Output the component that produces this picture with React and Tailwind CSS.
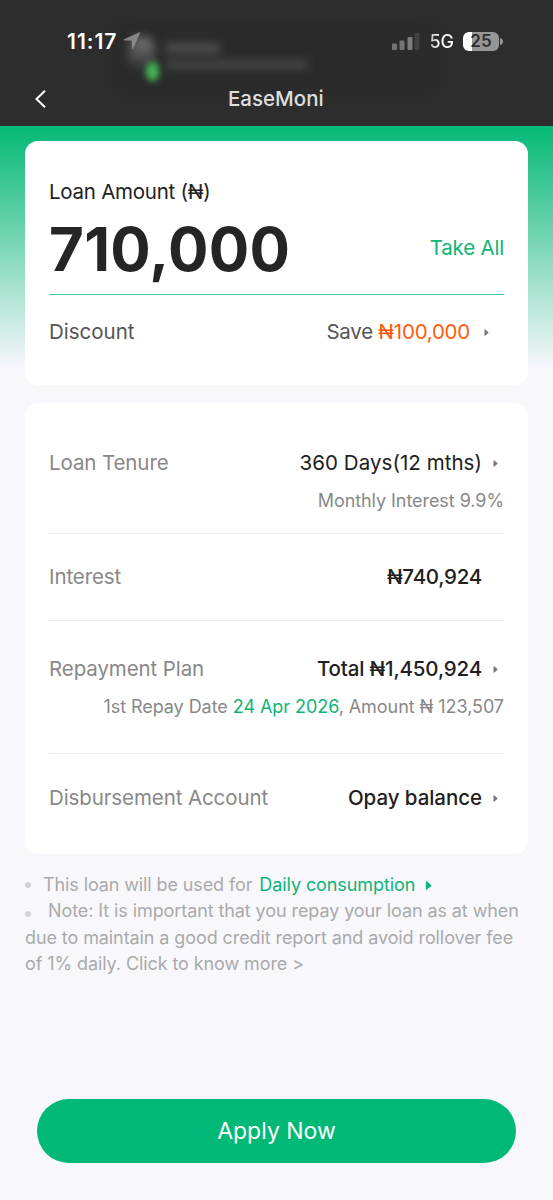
function Arrow({ className }) {
  return (
    <svg viewBox="0 0 6 8" className={className} fill="currentColor">
      <path d="M.6.8C.6.2 1.1 0 1.6.4L5.2 3.4c.4.4.4.8 0 1.2L1.6 7.6C1.1 8 .6 7.8.6 7.2z" />
    </svg>
  );
}

function StatusBar() {
  return (
    <div className="flex h-[82px] items-center pl-[67px] pr-[50px] text-white">
      <span className="w-[52px] pt-px text-[21px] font-semibold tracking-[1px]">11:17</span>
      <svg viewBox="0 0 18 18" className="ml-1 h-[18px] w-[18px] text-[#858585]" fill="currentColor">
        <path d="M17.2.9c.3-.6-.1-.9-.7-.7L1.2 7.2c-.8.4-.7 1.2.2 1.3l7.3.3.2 7.5c.1.9.9 1 1.3.2z" />
      </svg>
      <div className="ml-auto flex items-center">
        <svg viewBox="0 0 28 17" className="h-[17px] w-[28px]">
          <rect x="0" y="10.500" width="5" height="6.500" rx="1.300" fill="#747474" />
          <rect x="7.500" y="7.500" width="5" height="9.500" rx="1.300" fill="#747474" />
          <rect x="15.500" y="4" width="5" height="13" rx="1.300" fill="#7c7c7c" />
          <rect x="22.500" y="0" width="5" height="17" rx="1.300" fill="#424242" />
        </svg>
        <span className="ml-[9px] bg-gradient-to-r from-[#b5b5b5] to-white to-40% bg-clip-text text-[18px] font-medium text-transparent">5G</span>
        <div className="ml-[9px] flex h-[19px] w-[36px] items-center justify-center rounded-[6px] bg-gradient-to-r from-white from-25% to-[#969696] to-25% text-[17px] font-semibold leading-none text-[#2e2e2e]">
          25
        </div>
        <svg viewBox="0 0 3 7" className="ml-px h-[7px] w-[3px]" fill="#969696">
          <path d="M0 0q3 1 3 3.500T0 7z" />
        </svg>
      </div>
    </div>
  );
}

// faded notification that slides away under the status bar
function Notification() {
  return (
    <div className="pointer-events-none absolute left-[112px] top-[22px] h-[72px] w-[328px]">
      <div className="absolute inset-0 rounded-[22px] bg-black/4 blur-[3px]" />
      <div className="absolute left-[17px] top-[14px] h-[36px] w-[26px] rounded-full bg-gradient-to-b from-[#727272] via-[#555] to-[#292929] blur-[4px]" />
      <div className="absolute left-[34px] top-[40px] h-[19px] w-[13px] rounded-full bg-[#45b455] blur-[3px]" />
      <div className="absolute left-[54px] top-[21px] h-[11px] w-[54px] bg-[#4c4c4c] blur-[4px]" />
      <div className="absolute left-[54px] top-[38px] h-[9px] w-[142px] bg-[#444] blur-[4px]" />
    </div>
  );
}

function Row({ label, value, valueClass = "", arrow = true }) {
  return (
    <div className="flex h-7 items-center text-[#202020]">
      <span className="text-[20.5px] tracking-[-0.1px] text-[#888]">{label}</span>
      <span className={`ml-auto text-[20.5px] ${valueClass}`}>{value}</span>
      <span className="flex w-[22px] shrink-0 pl-[11px]">
        {arrow && <Arrow className="h-[7px] w-[5px] text-[#777]" />}
      </span>
    </div>
  );
}

export default function App() {
  return (
    <div className="flex h-[1200px] w-[553px] flex-col bg-[#f7f7fc] font-['Inter','Noto_Sans',sans-serif] whitespace-nowrap">
      <header className="relative h-[126px] shrink-0 bg-[#2d2d2d]">
        <Notification />
        <div className="relative">
          <StatusBar />
          <div className="flex h-[33px] items-center">
            <svg viewBox="0 0 11 18" className="ml-[35px] h-[18px] w-[11px]" fill="none" stroke="white" strokeWidth="2">
              <path d="M10 .7 1.500 9 10 17.300" />
            </svg>
            <h1 className="ml-[182px] pt-px text-[20.5px] font-medium text-[#dedede]">EaseMoni</h1>
          </div>
        </div>
      </header>

      <main className="flex flex-1 flex-col bg-linear-[180deg,#06b978_0,#18bd80_20px,#f7f7fc_242px] px-[25px] pt-[15px]">
        <section className="h-[244px] rounded-[13px] bg-white px-6 pt-[37px]">
          <p className="h-7 text-[20.5px] leading-7 tracking-[-0.25px] text-[#222]">Loan Amount (₦)</p>
          <div className="flex h-[89px] items-center justify-between border-b border-[#4ccb9f] pb-[3px]">
            <span className="text-[60px] font-bold leading-none tracking-[0.3px] text-[#252525]">710,000</span>
            <span className="text-[20.5px] tracking-[-0.2px] text-[#0db476]">Take All</span>
          </div>
          <div className="flex h-[74px] items-center text-[20.5px] text-[#555]">
            <span>Discount</span>
            <span className="ml-auto tracking-[-0.25px]">
              Save <span className="text-[#ff5b0b]">₦100,000</span>
            </span>
            <Arrow className="ml-[14px] mr-[15px] h-[7px] w-[5px] text-[#777]" />
          </div>
        </section>

        <section className="mt-[18px] h-[451px] rounded-[13px] bg-white px-6">
          <div className="h-[131px] border-b border-[#ebebeb] pt-[46px]">
            <Row label="Loan Tenure" value="360 Days(12 mths)" valueClass="tracking-[0.05px]" />
            <p className="mt-[11px] text-right text-[18px] leading-[26px] tracking-[-0.06px] text-[#888]">Monthly Interest 9.9%</p>
          </div>
          <div className="h-[87px] border-b border-[#ebebeb] pt-[29px]">
            <Row label="Interest" value="₦740,924" valueClass="font-medium tracking-[-0.25px]" arrow={false} />
          </div>
          <div className="h-[133px] border-b border-[#ebebeb] pt-[34px]">
            <Row label="Repayment Plan" value="Total ₦1,450,924" valueClass="font-medium tracking-[-0.15px]" />
            <p className="mt-[11px] text-right text-[18px] leading-[26px] tracking-[-0.06px] text-[#888]">
              1st Repay Date <span className="text-[#0db476]">24 Apr 2026</span>, Amount ₦ 123,507
            </p>
          </div>
          <div className="pt-[30px]">
            <Row label="Disbursement Account" value="Opay balance" valueClass="font-medium tracking-[-0.05px]" />
          </div>
        </section>

        <div className="mt-[18px] text-[18px] leading-[26.4px] tracking-[-0.09px] text-[#aaa]">
          <div className="flex items-center">
            <i className="mr-3 h-[6px] w-[6px] rounded-full bg-[#d2d2d5]" />
            <span className="tracking-[-0.11px]">This loan will be used for</span>
            <span className="ml-[7px] text-[#0db476]">Daily consumption</span>
            <Arrow className="ml-[10px] h-[9px] w-[7px] text-[#0db476]" />
          </div>
          <div className="flex items-center">
            <i className="mr-[17px] mt-[5px] h-[6px] w-[6px] rounded-full bg-[#d2d2d5]" />
            <span>Note: It is important that you repay your loan as at when</span>
          </div>
          <p>due to maintain a good credit report and avoid rollover fee</p>
          <p>of 1% daily. Click to know more &gt;</p>
        </div>

        <button className="mx-3 mb-[37px] mt-auto h-16 rounded-full bg-[#00b976] text-[23px] text-white">Apply Now</button>
      </main>
    </div>
  );
}
